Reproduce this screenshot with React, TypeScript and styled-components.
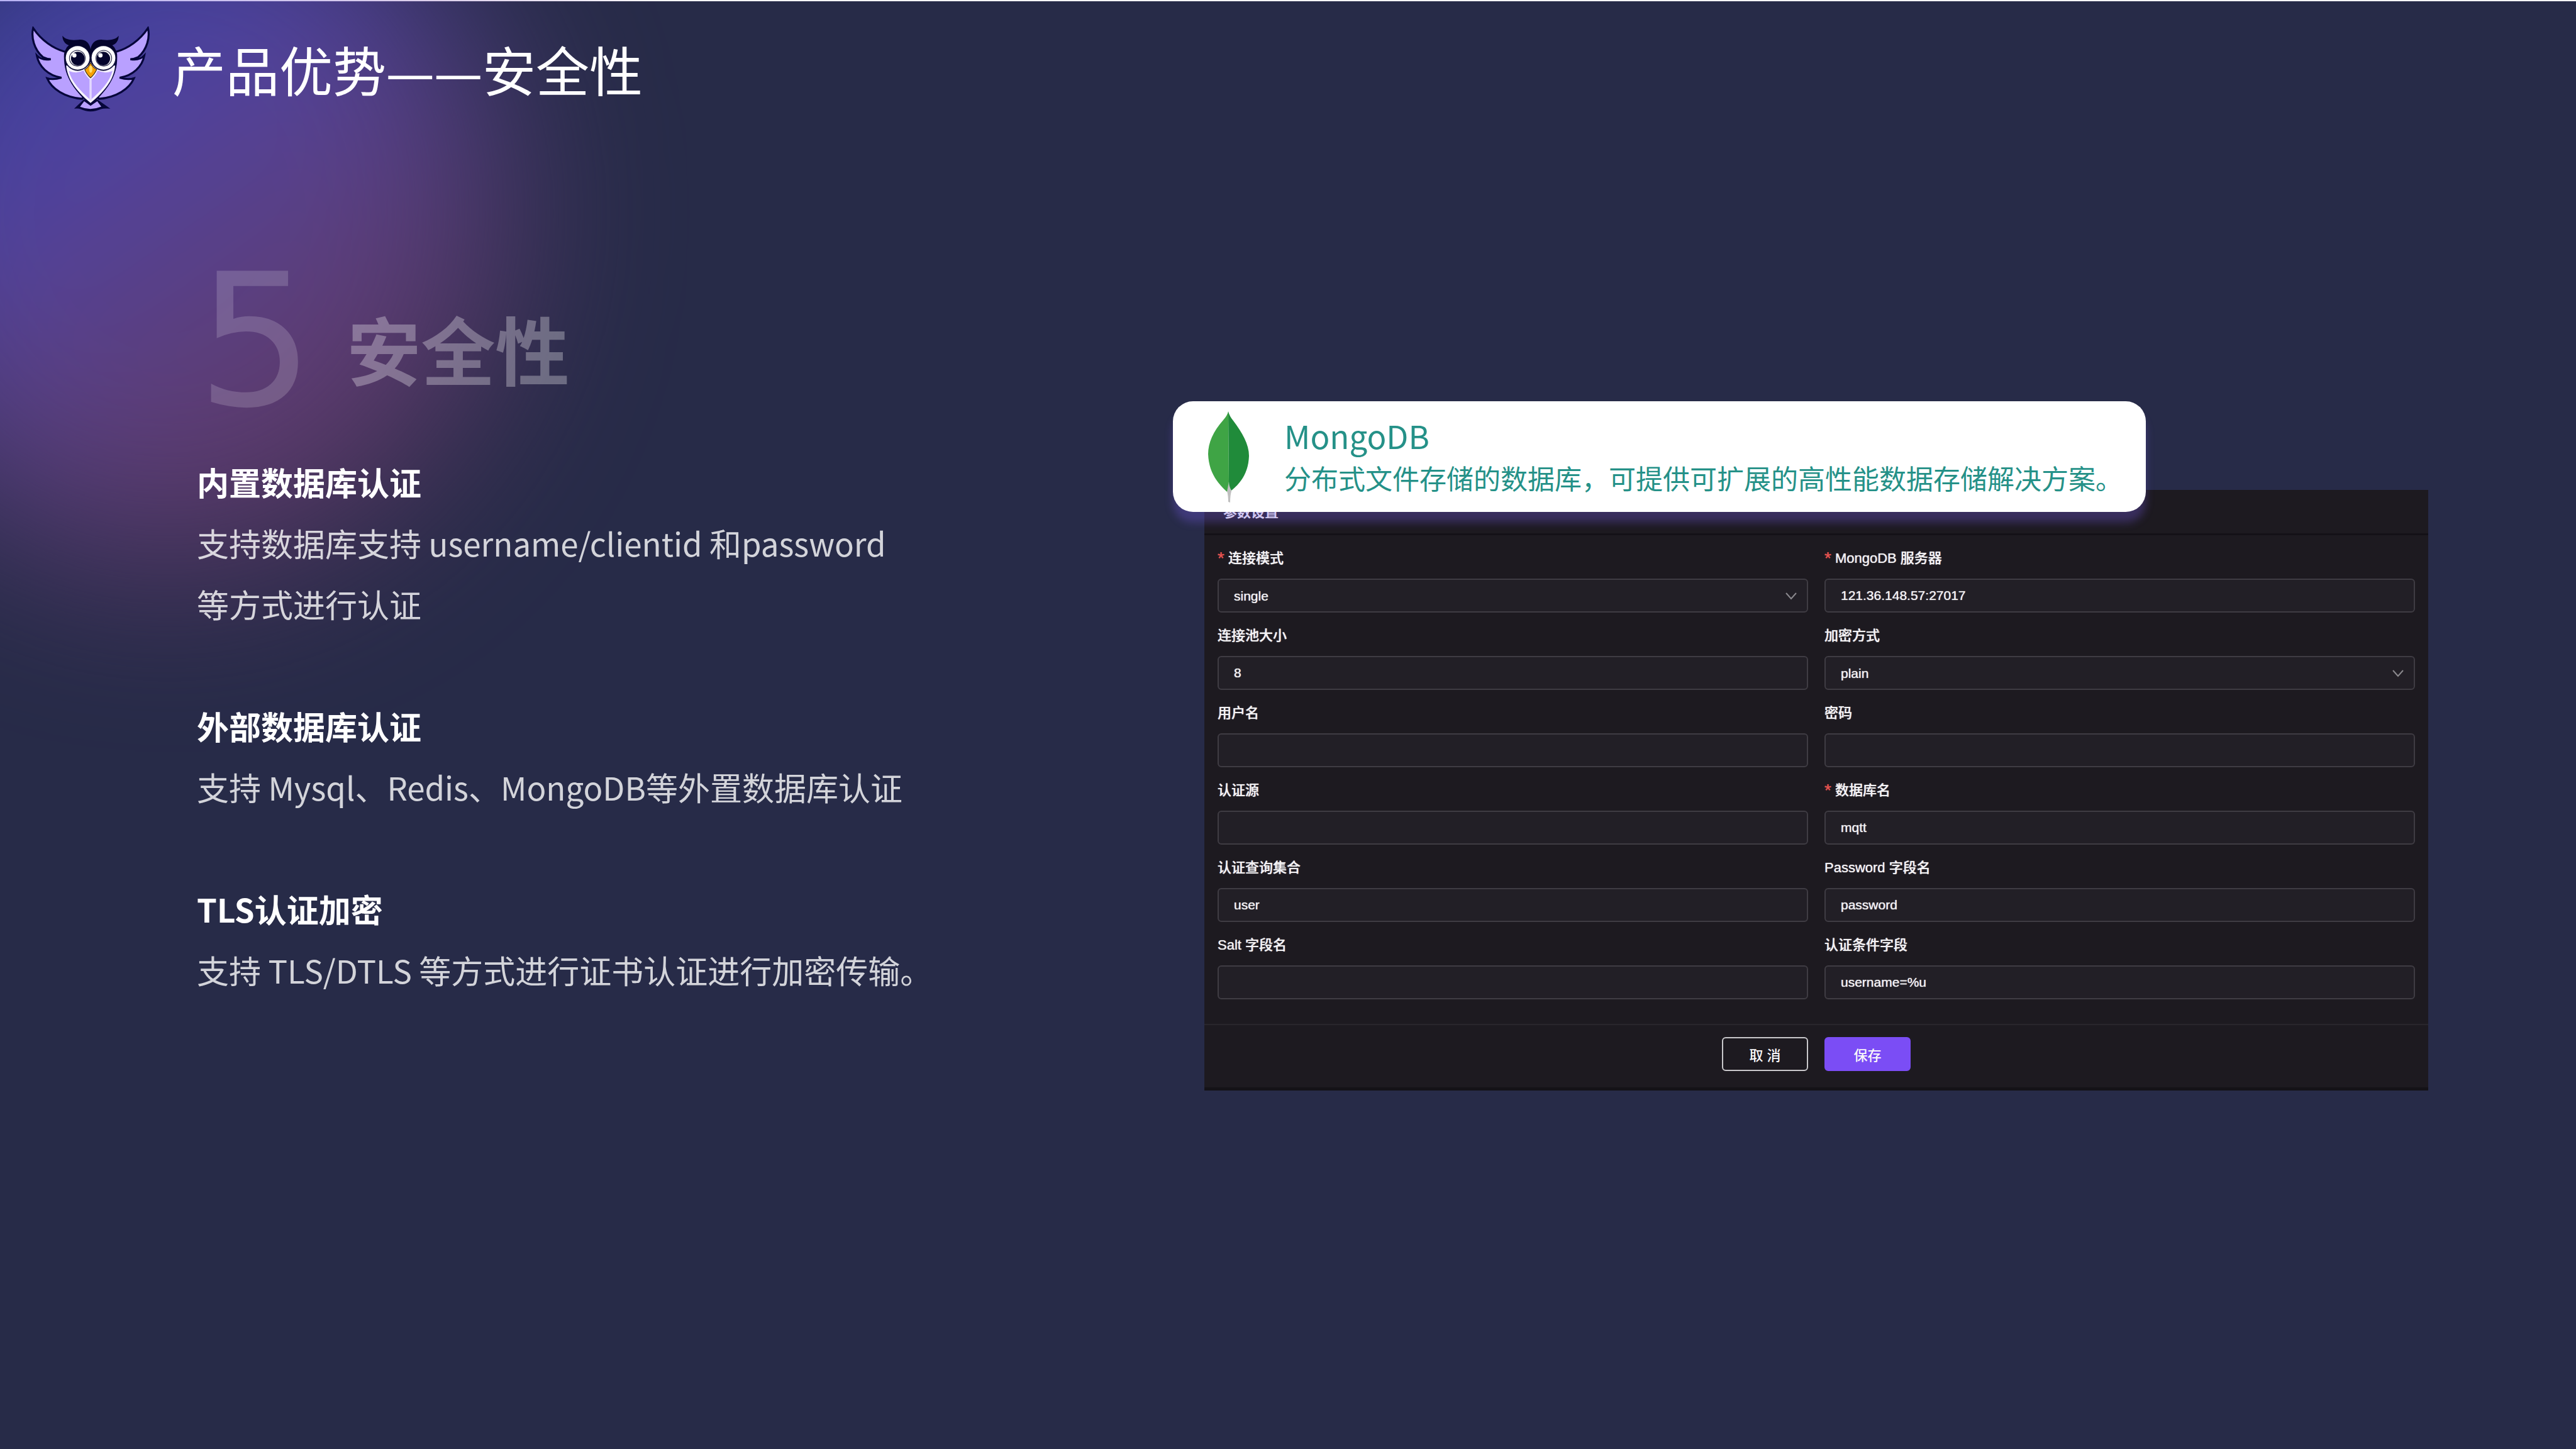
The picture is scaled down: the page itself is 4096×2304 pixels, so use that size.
import React, { useId } from "react";
import styled, { createGlobalStyle } from "styled-components";

const cjk = `"Noto Sans CJK SC", "Noto Sans", sans-serif`;
const formFont = `"Liberation Sans", "Noto Sans CJK SC", sans-serif`;

const GlobalStyle = createGlobalStyle`
  *, *::before, *::after { box-sizing: border-box; }
  body { margin: 0; background: #272b48; }
  h1, h2, h3, p { margin: 0; font-weight: 400; }
`;

const Page = styled.div`
  position: relative;
  isolation: isolate;
  display: flex;
  flex-direction: column;
  min-height: 100vh;
  overflow: hidden;
  background: #272b48;
  color: #fff;
  font-family: ${cjk};
`;

const Glow = styled.div`
  position: absolute;
  z-index: -1;
  top: -220px;
  left: -260px;
  width: 1060px;
  height: 1120px;
  border-radius: 50%;
  background: linear-gradient(145deg, #3040a0 12%, #5446ae 38%, #61438a 58%, #653c6c 78%, #6b3a60 100%);
  filter: blur(140px);
  opacity: 0.9;
`;

const TopLine = styled.div`
  height: 2px;
  background: linear-gradient(90deg, #b9b3f5, #ddd0ec 17%, #fff 27%);
`;

const Header = styled.header`
  display: flex;
  align-items: center;
  gap: 35px;
  padding: 40px 49px 0;
`;

const OwlSvg = styled.svg`
  width: 190px;
  height: 136px;
  flex: none;
`;

const PageTitle = styled.h1`
  padding-top: 14px;
  font-family: "DejaVu Serif Condensed", ${cjk};
  font-size: 85px;
  line-height: 120px;
`;

const Main = styled.main`
  display: grid;
  grid-template-columns: 1602fr 1946fr;
  align-items: start;
  padding: 0 235px 0 313px;
`;

const Intro = styled.section`
  padding-top: 218px;
`;

const IntroHeading = styled.div`
  display: flex;
  align-items: center;
  gap: 52px;
  margin-bottom: 29px;
`;

const StepNumber = styled.span`
  font-family: "DejaVu Sans", sans-serif;
  font-size: 293px;
  line-height: 293px;
  color: rgba(255, 255, 255, 0.17);
`;

const IntroTitle = styled.h2`
  padding-top: 20px;
  font-size: 118px;
  font-weight: 700;
  line-height: 160px;
  color: rgba(255, 255, 255, 0.3);
`;

const Topics = styled.div`
  display: flex;
  flex-direction: column;
  gap: 97px;
  font-size: 51px;
  line-height: 97px;
`;

const TopicTitle = styled.h3`
  font-size: 51px;
  font-weight: 700;
`;

const TopicText = styled.p`
  color: rgba(255, 255, 255, 0.8);
`;

const Demo = styled.section`
  display: flex;
  flex-direction: column;
  padding-top: 460px;
`;

const ProductCard = styled.div`
  position: relative;
  z-index: 1;
  align-self: flex-start;
  display: flex;
  align-items: center;
  gap: 56px;
  height: 176px;
  margin: 0 0 -35px -50px;
  padding: 0 37px 0 56px;
  border-radius: 32px;
  background: #fff;
  box-shadow: 0 17px 14px rgba(124, 92, 240, 0.3);
  color: #259188;
`;

const LeafSvg = styled.svg`
  width: 65px;
  height: 145px;
  flex: none;
`;

const ProductName = styled.h3`
  font-size: 51px;
  line-height: 67px;
`;

const ProductText = styled.p`
  font-size: 43px;
  line-height: 67px;
  white-space: nowrap;
`;

const Panel = styled.form`
  border-bottom: 5px solid #141217;
  background: #1d1a20;
  color: #f3f2f4;
  font-family: ${formFont};
  font-size: 22px;
`;

const PanelTitle = styled.h3`
  padding: 20px 30px 17px;
  border-bottom: 3px solid #141117;
  font-size: 22px;
  font-weight: 700;
  line-height: 32px;
`;

const Fields = styled.div`
  display: grid;
  grid-template-columns: 1fr 1fr;
  gap: 20px 26px;
  padding: 20px 21px 39px;
`;

const FieldBox = styled.div`
  display: flex;
  flex-direction: column;
  gap: 15px;
`;

const Label = styled.label`
  display: flex;
  align-items: center;
  gap: 6px;
  font-size: 22px;
  font-weight: 500;
  line-height: 34px;
  text-shadow: 0 0 1px currentColor;
`;

const Required = styled.span`
  color: #e5534f;
  font-size: 28px;
`;

const controlStyle = `
  width: 100%;
  height: 54px;
  margin: 0;
  padding: 0 24px;
  border: 2px solid #3f3c43;
  border-radius: 6px;
  background: #221f26;
  color: #f3f2f4;
  font-family: ${formFont};
  font-size: 21px;
  text-shadow: 0 0 1px #f3f2f4;
  appearance: none;
  outline: none;
`;

const TextInput = styled.input`${controlStyle}`;
const Select = styled.select`${controlStyle}`;

const SelectWrap = styled.div`
  position: relative;
`;

const Chevron = styled.svg`
  position: absolute;
  top: 22px;
  right: 18px;
  width: 18px;
  height: 12px;
  pointer-events: none;
`;

const Actions = styled.footer`
  display: flex;
  justify-content: center;
  gap: 26px;
  padding: 19px 21px 26px;
  border-top: 2px solid #29262c;
`;

const Button = styled.button<{ $primary?: boolean }>`
  width: 137px;
  height: 54px;
  padding: 0;
  border: 2px solid ${(p) => (p.$primary ? "#7b4df5" : "#c9c8cb")};
  border-radius: 6px;
  background: ${(p) => (p.$primary ? "#7b4df5" : "transparent")};
  color: #f8f7fa;
  font-family: ${formFont};
  font-size: 22px;
  font-weight: 500;
`;

function OwlWing() {
  return (
    <path
      d="M268 217C200 198 128 150 79 75C66 130 84 204 138 250Q158 260 184 262Q130 272 101 240C112 305 168 360 248 373Q200 388 163 377C190 440 268 492 372 500L420 440L300 250Z"
      fill="#b9a0ff"
      stroke="#06063a"
      strokeWidth="12"
      strokeLinejoin="miter"
    />
  );
}

function OwlFace() {
  return (
    <>
      <path d="M254 121C272 146 310 150 352 145C392 142 416 165 422 202L422 300L268 250Q262 200 292 178C268 170 254 150 254 121Z" fill="#04042c" />
      <circle cx="345" cy="256" r="76" fill="#12123c" />
      <circle cx="345" cy="254" r="71" fill="#fff" />
      <circle cx="343" cy="256" r="47" fill="#fff" stroke="#3d3d5c" strokeWidth="5" />
      <circle cx="346" cy="258" r="41" fill="#04042c" />
    </>
  );
}

function Owl() {
  return (
    <OwlSvg viewBox="65 65 714 514" preserveAspectRatio="none" aria-hidden="true">
      <OwlWing />
      <g transform="matrix(-1 0 0 1 844 0)">
        <OwlWing />
      </g>
      <path d="M380 505L324 559Q350 556 362 562Q422 590 484 562Q500 556 540 559L464 505Z" fill="#06063a" />
      <path d="M384 515L422 542L462 515L486 547Q422 574 359 548Z" fill="#b9a0ff" />
      <path d="M264 225C256 350 310 440 422 538C534 440 590 350 580 225Z" fill="#06063a" />
      <path d="M276 300C286 390 340 455 422 525C504 455 560 390 569 300Z" fill="#f6f2ff" />
      <path d="M292 332Q340 352 380 330Q396 366 422 388Q450 366 465 330Q505 352 553 332C535 400 485 450 422 507C360 450 310 400 292 332Z" fill="#b9a0ff" />
      <path d="M422 384V510" stroke="#e4d9ff" strokeWidth="13" />
      <OwlFace />
      <g transform="matrix(-1 0 0 1 844 0)">
        <OwlFace />
      </g>
      <circle cx="325" cy="239" r="13" fill="#fff" />
      <circle cx="481" cy="239" r="13" fill="#fff" />
      <path d="M422 278Q438 312 464 324Q448 364 422 386Q396 364 380 324Q406 312 422 278Z" fill="#f3efff" />
      <path d="M422 283Q436 312 459 324Q444 356 422 374Q400 356 387 324Q408 312 422 283Z" fill="#f5a100" stroke="#3a2a20" strokeWidth="4" />
      <ellipse cx="423" cy="322" rx="10" ry="22" fill="#ffdc6a" />
    </OwlSvg>
  );
}

function MongoLeaf() {
  return (
    <LeafSvg viewBox="0 0 65 145" aria-hidden="true">
      <path d="M32 112L30 127Q32 134 32 144L35 145Q35 134 37 127Z" fill="#bfbfbf" />
      <path d="M32 0Q31 6 24 14C8 32 0 50 0 68C1 94 12 112 30 128L33 112Z" fill="#3fa445" />
      <path d="M32 0Q34 8 40 15C54 34 65 52 65 71C64 96 54 112 37 126Q33 119 33 112Z" fill="#208b3a" />
    </LeafSvg>
  );
}

type FieldProps = {
  label: string;
  value?: string;
  required?: boolean;
  select?: boolean;
};

function Field({ label, value = "", required, select }: FieldProps) {
  const id = useId();
  return (
    <FieldBox>
      <Label htmlFor={id}>
        {required && <Required>*</Required>}
        {label}
      </Label>
      {select ? (
        <SelectWrap>
          <Select id={id} defaultValue={value}>
            <option value={value}>{value}</option>
          </Select>
          <Chevron viewBox="0 0 18 12" fill="none" stroke="#8b898e" strokeWidth="2" aria-hidden="true">
            <path d="M1 1L9 10L17 1" />
          </Chevron>
        </SelectWrap>
      ) : (
        <TextInput id={id} type="text" defaultValue={value} />
      )}
    </FieldBox>
  );
}

const fields: FieldProps[] = [
  { label: "连接模式", value: "single", required: true, select: true },
  { label: "MongoDB 服务器", value: "121.36.148.57:27017", required: true },
  { label: "连接池大小", value: "8" },
  { label: "加密方式", value: "plain", select: true },
  { label: "用户名" },
  { label: "密码" },
  { label: "认证源" },
  { label: "数据库名", value: "mqtt", required: true },
  { label: "认证查询集合", value: "user" },
  { label: "Password 字段名", value: "password" },
  { label: "Salt 字段名" },
  { label: "认证条件字段", value: "username=%u" },
];

export default function App() {
  return (
    <Page lang="zh-CN">
      <GlobalStyle />
      <Glow />
      <TopLine />
      <Header>
        <Owl />
        <PageTitle>产品优势——安全性</PageTitle>
      </Header>
      <Main>
        <Intro>
          <IntroHeading>
            <StepNumber>5</StepNumber>
            <IntroTitle>安全性</IntroTitle>
          </IntroHeading>
          <Topics>
            <div>
              <TopicTitle>内置数据库认证</TopicTitle>
              <TopicText>
                支持数据库支持 username/clientid 和password
                <br />
                等方式进行认证
              </TopicText>
            </div>
            <div>
              <TopicTitle>外部数据库认证</TopicTitle>
              <TopicText>支持 Mysql、Redis、MongoDB等外置数据库认证</TopicText>
            </div>
            <div>
              <TopicTitle>TLS认证加密</TopicTitle>
              <TopicText>支持 TLS/DTLS 等方式进行证书认证进行加密传输。</TopicText>
            </div>
          </Topics>
        </Intro>
        <Demo>
          <ProductCard>
            <MongoLeaf />
            <div>
              <ProductName>MongoDB</ProductName>
              <ProductText>分布式文件存储的数据库，可提供可扩展的高性能数据存储解决方案。</ProductText>
            </div>
          </ProductCard>
          <Panel onSubmit={(e) => e.preventDefault()}>
            <PanelTitle>参数设置</PanelTitle>
            <Fields>
              {fields.map((f) => (
                <Field key={f.label} {...f} />
              ))}
            </Fields>
            <Actions>
              <Button type="button">取 消</Button>
              <Button type="submit" $primary>
                保存
              </Button>
            </Actions>
          </Panel>
        </Demo>
      </Main>
    </Page>
  );
}
